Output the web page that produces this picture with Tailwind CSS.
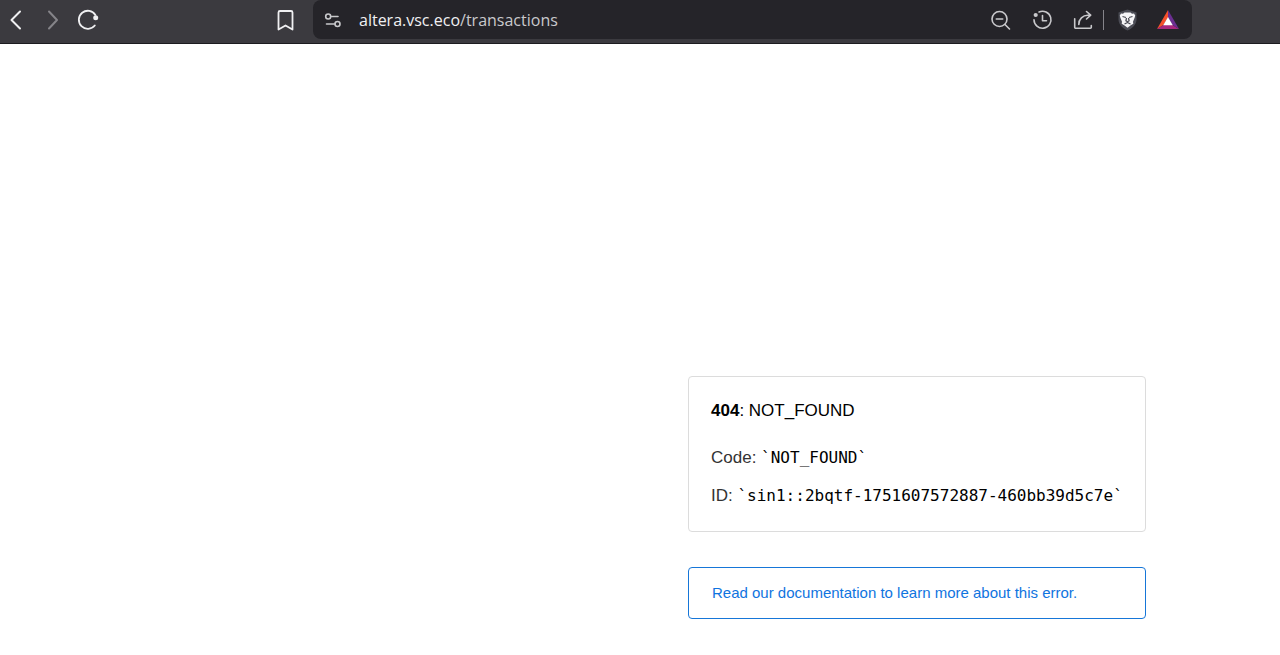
<!DOCTYPE html>
<html lang="en">
<head>
    <meta charset="UTF-8">
    <meta name="viewport" content="width=device-width, initial-scale=1.0">
    <title>404: NOT_FOUND</title>
    <script src="https://cdn.jsdelivr.net/npm/@tailwindcss/browser@4"></script>
</head>
<body class="flex min-h-screen flex-col bg-white font-['Liberation_Sans',Arial,sans-serif]">
    <!-- Browser toolbar -->
    <header class="flex items-start border-b border-[#1c1b1f] bg-[#3b3a3f] pb-1 pr-[88px] text-[#f0f0f2]">
        <nav class="flex h-[39px] flex-1 items-center gap-3 pl-1" aria-label="Browser">
            <button aria-label="Back" class="size-6">
                <svg class="size-6" viewBox="0 0 24 24" fill="none" stroke="currentColor" stroke-width="2" stroke-linecap="round" stroke-linejoin="round"><path d="M16 3.500 7.500 12 16 20.500"/></svg>
            </button>
            <button aria-label="Forward" class="size-6 text-[#858489]">
                <svg class="size-6" viewBox="0 0 24 24" fill="none" stroke="currentColor" stroke-width="2" stroke-linecap="round" stroke-linejoin="round"><path d="M9 3.500 17 12 9 20.500"/></svg>
            </button>
            <button aria-label="Reload" class="size-6">
                <svg class="size-6" viewBox="0 0 24 24" fill="none" stroke="currentColor" stroke-width="1.800" stroke-linecap="round"><path d="M18.800 17.500A9 9 0 1 1 19.400 6.900"/><circle cx="19.700" cy="9.700" r="2.500" fill="currentColor" stroke="none"/></svg>
            </button>
            <button aria-label="Bookmark this page" class="ml-auto mr-4 size-6">
                <svg class="size-6" viewBox="0 0 24 24" fill="none" stroke="currentColor" stroke-width="1.800" stroke-linejoin="round"><path d="M5.500 4.500A1.500 1.500 0 0 1 7 3h11A1.500 1.500 0 0 1 19.500 4.500V21.500L12.500 17.500 5.500 21.500Z"/></svg>
            </button>
        </nav>
        <div class="flex h-[39px] w-[879px] items-center rounded-lg bg-[#252429] pl-2 pr-3 text-[#c9c9cc]">
            <button aria-label="View site information" class="size-6">
                <svg class="size-6" viewBox="0 0 24 24" fill="none" stroke="currentColor" stroke-width="1.600" stroke-linecap="round"><circle cx="7.200" cy="8.500" r="2.500"/><path d="M10.500 8.500h6.500M5.500 16h8"/><circle cx="16.500" cy="16" r="2.500"/></svg>
            </button>
            <p class="flex-1 pl-[14px] font-['Open_Sans','Noto_Sans',sans-serif] text-[16px] leading-6"><span class="text-[#f0f0f2]">altera.vsc.eco</span>/transactions</p>
            <div class="flex items-center gap-[17px]">
                <button aria-label="Zoom" class="size-6">
                    <svg class="size-6" viewBox="0 0 24 24" fill="none" stroke="currentColor" stroke-width="1.600" stroke-linecap="round"><circle cx="10.500" cy="11" r="7.500"/><path d="M7.300 11h6.400M16 16.500 20.500 21"/></svg>
                </button>
                <button aria-label="History" class="size-6">
                    <svg class="size-6" viewBox="0 0 24 24" fill="none" stroke="currentColor" stroke-width="1.600" stroke-linecap="round" stroke-linejoin="round"><path d="M9 4A8.500 8.500 0 1 1 4 11.800M12.500 7.500v5.300h4"/><circle cx="5.700" cy="7" r="2.100" fill="currentColor" stroke="none"/></svg>
                </button>
                <button aria-label="Share" class="size-6">
                    <svg class="size-6" viewBox="0 0 24 24" fill="none" stroke="currentColor" stroke-width="1.600" stroke-linecap="round" stroke-linejoin="round"><path d="M3.700 10.700v8.500a1 1 0 0 0 1 1h14.600a1 1 0 0 0 1-1V17.500M15.500 3.500 19.700 7.200 15.500 11M19.500 7.200H17A9 9 0 0 0 7.800 16.500"/></svg>
                </button>
            </div>
            <div class="ml-2 flex h-5 items-center gap-4 border-l border-[#85848a] pl-3">
                <button aria-label="Brave Shields" class="size-6">
                    <svg class="size-6" viewBox="0 0 24 24"><path fill="#4b4c55" d="M11.500 1.500 20.500 4.500v7c0 5-4.500 9-9 11-4.500-2-9-6-9-11v-7Z"/><path fill="#f5f5f7" d="M8.500 4.500h6l1.500 1.200 2-.2 1.200 2-.5 2-1.700 4.200.3 2-2.500 1.600-3.300 2.500-3.300-2.500-2.500-1.600.3-2-1.700-4.200-.5-2 1.200-2 2 .2Z"/><path fill="none" stroke="#4b4c55" stroke-width="1.300" stroke-linejoin="round" d="m6.500 8.500 3.500 1M16.500 8.500l-3.500 1M10.500 10l-.6 2.800 1.600 1 1.600-1-.6-2.800M8.500 16l3-1.500 3 1.500"/></svg>
                </button>
                <button aria-label="Brave Rewards" class="size-6">
                    <svg class="size-6" viewBox="0 0 24 24"><path fill="#f5502b" d="M12 2 1 21l6.500-4L12 9.500Z"/><path fill="#a8287f" d="M1 21h22l-6.500-4h-9Z"/><path fill="#6b2f91" d="M12 2v7.500l4.500 7.500L23 21Z"/><path fill="#fff" d="m12 9 4.800 8.200H7.200Z"/></svg>
                </button>
            </div>
        </div>
    </header>

    <!-- Error page -->
    <main class="flex flex-1 flex-col items-end justify-end gap-[35px] pb-9 pr-[134px]">
        <section class="w-[458px] max-w-full rounded border border-[#dcdcdc] px-[22px] pt-[22px] pb-[23px] text-[17px] leading-6 text-[#333]">
            <h1 class="text-black"><strong>404</strong>: NOT_FOUND</h1>
            <p class="mt-[23px]">Code: <code class="font-['DejaVu_Sans_Mono',monospace] text-[16px] text-black">`NOT_FOUND`</code></p>
            <p class="mt-[14px] whitespace-nowrap">ID: <code class="font-['DejaVu_Sans_Mono',monospace] text-[16px] text-black">`sin1::2bqtf-1751607572887-460bb39d5c7e`</code></p>
        </section>
        <a href="#" class="w-[458px] max-w-full rounded border border-[#1676d8] px-[23px] py-[13px] text-[15px] leading-6 text-[#0f74e0]">Read our documentation to learn more about this error.</a>
    </main>
</body>
</html>
